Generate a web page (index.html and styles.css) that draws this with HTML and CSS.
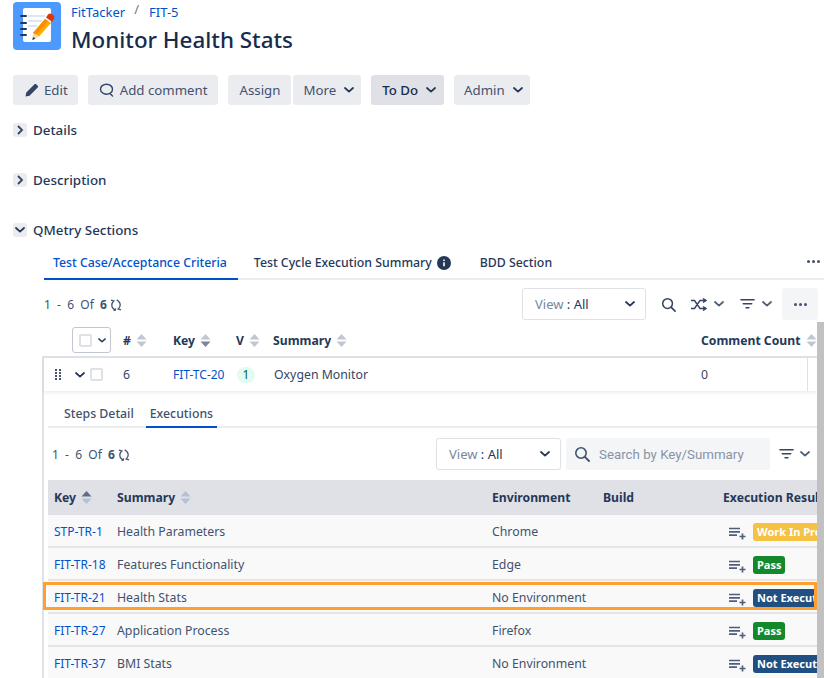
FILE: index.html
```html
<!DOCTYPE html>
<html lang="en">
<head>
  <meta charset="UTF-8">
  <title>FIT-5 Monitor Health Stats</title>
  <link rel="stylesheet" href="styles.css">
</head>
<body>
  <svg width="0" height="0" class="defs">
    <defs>
      <symbol id="chev" viewBox="0 0 10 6"><path d="M1 1l4 3.6L9 1" fill="none" stroke="currentColor" stroke-width="1.8" stroke-linecap="round" stroke-linejoin="round"/></symbol>
      <symbol id="refresh" viewBox="0 0 12 12"><path d="M1 1.200L3.800 2C1.200 4.300 1.200 7.800 3.500 9.800l1.800 1.400M3.500 11.400l1.800-.2.200-1.800M11 10.800L8.200 10C10.800 7.700 10.800 4.200 8.500 2.200L6.700.8" fill="none" stroke="currentColor" stroke-width="1.300"/></symbol>
      <symbol id="search" viewBox="0 0 16 16"><circle cx="7" cy="7" r="5.200" fill="none" stroke="currentColor" stroke-width="1.600"/><path d="M11 11l4 4" stroke="currentColor" stroke-width="1.800" stroke-linecap="round"/></symbol>
      <symbol id="filter" viewBox="0 0 16 12"><path d="M1 1.500h14M3.500 5.800h9M6.500 10h3" stroke="currentColor" stroke-width="1.600" stroke-linecap="round"/></symbol>
      <symbol id="add-list" viewBox="0 0 17 14"><path d="M0 2.500h11M0 5.800h11M0 9.100h8M10.500 10.500h6M13.500 7.500v6" stroke="currentColor" stroke-width="1.700" fill="none"/></symbol>
      <symbol id="sort" viewBox="0 0 11 13"><path class="up" d="M5.500 0l5 5.500H.5z"/><path class="down" d="M5.500 13l-5-5.500h10z"/></symbol>
    </defs>
  </svg>

  <div class="issue-header">
    <svg class="project-icon" width="48" height="48" viewBox="0 0 48 48">
      <rect width="48" height="48" rx="4" fill="#4c9aff"/>
      <rect x="10" y="6" width="28" height="34" rx="2" fill="#fff"/>
      <path d="M8 14h5M8 21h5M8 27h5M8 33h5" stroke="#253858" stroke-width="2" stroke-linecap="round"/>
      <path d="M15 14h17M15 19h14M15 24h9" stroke="#dce7f5" stroke-width="2"/>
      <path d="M32 17l6 4-12 13.500-6-3.500z" fill="#ffab00"/>
      <path d="M32 17l3 2-12 13.700-3-1.700z" fill="#ff8b00"/>
      <path d="M20 31l6 3.500-6.500 3.500z" fill="#f4d6ad"/>
      <path d="M20 35l2.500 1.500-3.200 1.700z" fill="#253858"/>
      <path d="M33 15.500l2-3c1-1.200 2.500-1.300 3.800-.4l1.600 1.200c1.200.9 1.400 2.200.6 3.400l-2 3z" fill="#de350b"/>
    </svg>
    <div class="issue-title">
      <div class="breadcrumbs"><a>FitTacker</a><span class="slash">/</span><a>FIT-5</a></div>
      <h1>Monitor Health Stats</h1>
    </div>
  </div>

  <div class="actions">
    <button class="btn btn-edit">
      <svg width="14" height="14" viewBox="0 0 14 14"><path d="M.5 13.500l.8-4L9.500 1.300c.5-.5 1.200-.5 1.700 0l1.500 1.500c.5.5.5 1.200 0 1.700L4.500 12.700z" fill="#344563"/></svg>
      Edit
    </button>
    <button class="btn btn-comment">
      <svg width="15" height="14" viewBox="0 0 15 14"><path d="M7.500 1.200c3.300 0 6 2.100 6 5s-2.700 5-6 5c-1 0-2-.2-2.800-.5M7.500 1.200c-3.300 0-6 2.100-6 5 0 1.700 1 3.200 2.500 4M11 10.500l2.500 2.500" fill="none" stroke="#344563" stroke-width="1.400" stroke-linecap="round"/></svg>
      Add comment
    </button>
    <div class="btn-group">
      <button class="btn btn-assign">Assign</button>
      <button class="btn btn-drop">More <svg class="chev" width="10" height="6"><use href="#chev"/></svg></button>
    </div>
    <button class="btn btn-drop btn-status">To Do <svg class="chev" width="10" height="6"><use href="#chev"/></svg></button>
    <button class="btn btn-drop">Admin <svg class="chev" width="10" height="6"><use href="#chev"/></svg></button>
  </div>

  <div class="module closed">
    <span class="toggle"><svg width="8" height="10" viewBox="0 0 6 10"><path d="M1 1l4 4-4 4" fill="none" stroke="#344563" stroke-width="1.800"/></svg></span>
    <span>Details</span>
  </div>
  <div class="module closed">
    <span class="toggle"><svg width="8" height="10" viewBox="0 0 6 10"><path d="M1 1l4 4-4 4" fill="none" stroke="#344563" stroke-width="1.800"/></svg></span>
    <span>Description</span>
  </div>
  <div class="module">
    <span class="toggle"><svg class="chev" width="10" height="6"><use href="#chev"/></svg></span>
    <span>QMetry Sections</span>
  </div>

  <div class="qmetry">
    <div class="tabs main-tabs">
      <div class="tab active">Test Case/Acceptance Criteria</div>
      <div class="tab">Test Cycle Execution Summary
        <svg width="14" height="14" viewBox="0 0 14 14"><circle cx="7" cy="7" r="7" fill="#253858"/><path d="M7 6.300v4M7 3.500v1.400" stroke="#fff" stroke-width="1.600"/></svg>
      </div>
      <div class="tab">BDD Section</div>
      <div class="tab-more"><i></i><i></i><i></i></div>
    </div>

    <div class="toolbar">
      <div class="count">1 &nbsp;-&nbsp; 6 &nbsp;Of&nbsp; <b>6</b> <svg width="12" height="12"><use href="#refresh"/></svg></div>
      <div class="view-select"><span><em>View</em> : All</span><svg class="chev" width="10" height="6"><use href="#chev"/></svg></div>
      <svg class="tool-search" width="15" height="15"><use href="#search"/></svg>
      <svg class="tool-shuffle" width="16" height="13" viewBox="0 0 16 13"><path d="M0 2.500h3.500L9 10.500h5M0 10.500h3.500L9 2.500h5M12 .5l3 2-3 2M12 8.500l3 2-3 2" fill="none" stroke="#344563" stroke-width="1.400"/></svg>
      <svg class="chev tool-chev" width="10" height="6"><use href="#chev"/></svg>
      <svg class="tool-filter" width="15" height="12"><use href="#filter"/></svg>
      <svg class="chev tool-chev" width="10" height="6"><use href="#chev"/></svg>
      <div class="more-box"><i></i><i></i><i></i></div>
    </div>

    <div class="case-head">
      <div class="select-all"><span class="check"></span><svg class="chev" width="8" height="5"><use href="#chev"/></svg></div>
      <div class="th-num"># <svg class="sort" width="11" height="13"><use href="#sort"/></svg></div>
      <div class="th-key">Key <svg class="sort sort-down" width="11" height="13"><use href="#sort"/></svg></div>
      <div class="th-v">V <svg class="sort" width="11" height="13"><use href="#sort"/></svg></div>
      <div class="th-summary">Summary <svg class="sort" width="11" height="13"><use href="#sort"/></svg></div>
      <div class="th-count">Comment Count <svg class="sort" width="11" height="13"><use href="#sort"/></svg></div>
    </div>

    <div class="case-body">
      <div class="case-row">
        <div class="drag"><i></i><i></i><i></i><i></i><i></i><i></i><i></i><i></i></div>
        <svg class="chev row-chev" width="10" height="6"><use href="#chev"/></svg>
        <span class="check"></span>
        <div class="td-num">6</div>
        <a class="td-key">FIT-TC-20</a>
        <div class="td-v"><span class="version">1</span></div>
        <div class="td-summary">Oxygen Monitor</div>
        <div class="td-count">0</div>
      </div>

      <div class="detail">
        <div class="tabs sub-tabs">
          <div class="tab">Steps Detail</div>
          <div class="tab active">Executions</div>
        </div>

        <div class="toolbar sub-toolbar">
          <div class="count">1 &nbsp;-&nbsp; 6 &nbsp;Of&nbsp; <b>6</b> <svg width="12" height="12"><use href="#refresh"/></svg></div>
          <div class="view-select"><span><em>View</em> : All</span><svg class="chev" width="10" height="6"><use href="#chev"/></svg></div>
          <div class="search-box"><svg width="16" height="16"><use href="#search"/></svg><span>Search by Key/Summary</span></div>
          <svg class="tool-filter" width="15" height="12"><use href="#filter"/></svg>
          <svg class="chev tool-chev" width="10" height="6"><use href="#chev"/></svg>
        </div>

        <div class="exec-table">
          <div class="exec-row exec-head">
            <div>Key <svg class="sort sort-up" width="11" height="13"><use href="#sort"/></svg></div>
            <div>Summary <svg class="sort" width="11" height="13"><use href="#sort"/></svg></div>
            <div>Environment</div>
            <div>Build</div>
            <div>Execution Result</div>
          </div>
          <div class="exec-row">
            <a>STP-TR-1</a><div>Health Parameters</div><div>Chrome</div><div></div>
            <div class="result"><svg width="17" height="14"><use href="#add-list"/></svg><span class="badge wip">Work In Progress</span></div>
          </div>
          <div class="exec-row">
            <a>FIT-TR-18</a><div>Features Functionality</div><div>Edge</div><div></div>
            <div class="result"><svg width="17" height="14"><use href="#add-list"/></svg><span class="badge pass">Pass</span></div>
          </div>
          <div class="exec-row highlighted">
            <a>FIT-TR-21</a><div>Health Stats</div><div>No Environment</div><div></div>
            <div class="result"><svg width="17" height="14"><use href="#add-list"/></svg><span class="badge not-run">Not Executed</span></div>
          </div>
          <div class="exec-row">
            <a>FIT-TR-27</a><div>Application Process</div><div>Firefox</div><div></div>
            <div class="result"><svg width="17" height="14"><use href="#add-list"/></svg><span class="badge pass">Pass</span></div>
          </div>
          <div class="exec-row">
            <a>FIT-TR-37</a><div>BMI Stats</div><div>No Environment</div><div></div>
            <div class="result"><svg width="17" height="14"><use href="#add-list"/></svg><span class="badge not-run">Not Executed</span></div>
          </div>
        </div>
      </div>
    </div>
    <div class="scrollbar"></div>
  </div>
</body>
</html>
```

FILE: styles.css
```css
* {
  box-sizing: border-box;
}

body {
  margin: 0;
  padding: 2px 0 0 13px;
  height: 678px;
  overflow: hidden;
  font-family: "Noto Sans", sans-serif;
  font-size: 12.3px;
  color: #172b4d;
  background-color: #fff;
}

a {
  color: #0052cc;
  text-decoration: none;
}

.defs {
  position: absolute;
}

.chev {
  color: #253858;
}

/* Issue header */
.issue-header {
  display: flex;
  height: 48px;
}

.project-icon {
  flex: none;
}

.issue-title {
  margin-left: 10px;
}

.breadcrumbs {
  display: flex;
  height: 20px;
  line-height: 20px;
  font-size: 13px;
}

.slash {
  margin: -3px 10px 0 9px;
  color: #6b778c;
}

h1 {
  margin: 4px 0 0;
  font-size: 22.4px;
  font-weight: 500;
  line-height: 28px;
  color: #172b4d;
}

/* Action buttons */
.actions {
  display: flex;
  gap: 10px;
  margin-top: 25px;
}

.btn-group {
  display: flex;
  gap: 2px;
}

.btn {
  display: flex;
  align-items: center;
  gap: 5px;
  height: 30px;
  padding: 0 11px;
  border: 0;
  border-radius: 3px;
  background-color: #ebecf0;
  color: #42526e;
  font-family: inherit;
  font-size: 13.25px;
}

.btn-edit {
  padding: 0 10px 0 12px;
}

.btn-comment {
  gap: 6px;
  padding-right: 10px;
}

.btn-assign {
  padding: 0 11px 0 12px;
}

.btn-drop {
  padding: 0 7px 0 10px;
}

.btn .chev {
  margin-left: 3px;
}

.btn-status {
  padding: 0 8px 0 11px;
  background-color: #dfe1e6;
  color: #172b4d;
  font-weight: 500;
}

/* Collapsible modules */
.module {
  display: flex;
  align-items: center;
  gap: 6px;
  height: 20px;
  margin-top: 30px;
  font-size: 13.4px;
  font-weight: 500;
  color: #253858;
}

.actions + .module {
  margin-top: 15px;
}

.toggle {
  display: flex;
  align-items: center;
  justify-content: center;
  width: 14px;
  height: 14px;
  border-radius: 3px;
  background-color: #ebecf0;
}

/* QMetry panel */
.qmetry {
  position: relative;
  margin-left: 29px;
  margin-top: 10px;
}

.tabs {
  display: flex;
  align-items: flex-end;
  border-bottom: 2px solid #ebecf0;
}

.tab {
  display: flex;
  align-items: center;
  gap: 5px;
  margin-bottom: -2px;
  border-bottom: 2px solid transparent;
  color: #253858;
  white-space: nowrap;
}

.tab.active {
  color: #0052cc;
  border-bottom-color: #0052cc;
}

.main-tabs {
  height: 30px;
  width: 782px;
  margin-left: 2px;
  padding-right: 6px;
}

.main-tabs .tab {
  height: 30px;
  padding: 0 11px 3px 9px;
  margin-right: 16px;
  font-weight: 500;
}

.main-tabs .tab:nth-child(2) {
  margin-right: 17px;
  padding-right: 0;
  padding-left: 0;
}

.main-tabs .tab:nth-child(3) {
  padding-left: 12px;
}

.tab-more,
.more-box {
  display: flex;
  align-items: center;
  justify-content: center;
  gap: 2px;
}

.tab-more {
  height: 30px;
  margin-left: auto;
  padding-bottom: 3px;
}

.tab-more i,
.more-box i {
  width: 3px;
  height: 3px;
  border-radius: 50%;
  background-color: #42526e;
}

.toolbar {
  display: flex;
  align-items: center;
  height: 32px;
  margin-top: 8px;
  padding-left: 2px;
}

.count {
  flex: 1;
  font-size: 12px;
  color: #42526e;
  white-space: nowrap;
}

.count svg {
  vertical-align: -2px;
}

.view-select {
  display: flex;
  align-items: center;
  justify-content: space-between;
  width: 124px;
  height: 32px;
  padding: 0 10px 0 12px;
  border: 1px solid #dfe1e6;
  border-radius: 3px;
  font-size: 13px;
  color: #253858;
}

.view-select em {
  font-style: normal;
  color: #7a869a;
}

.tool-search {
  margin-left: 15px;
  color: #344563;
}

.tool-shuffle {
  margin-left: 15px;
}

.tool-chev {
  margin-left: 7px;
  color: #505f79;
}

.tool-filter {
  margin-left: 16px;
  color: #344563;
}

.more-box {
  width: 36px;
  height: 32px;
  margin-left: 10px;
  margin-right: 6px;
  border-radius: 3px;
  background-color: #f4f5f7;
}

/* Test case table */
.case-head {
  display: flex;
  align-items: center;
  height: 36px;
  padding-top: 4px;
  font-size: 12.2px;
  font-weight: 700;
  color: #253858;
  white-space: nowrap;
}

.select-all {
  display: flex;
  align-items: center;
  gap: 6px;
  width: 39px;
  height: 26px;
  margin-left: 30px;
  padding-left: 6px;
  border: 1px solid #c1c7d0;
  border-radius: 3px;
}

.check {
  display: block;
  flex: none;
  width: 13px;
  height: 13px;
  border: 2px solid #dfe1e6;
  border-radius: 2px;
}

.sort {
  vertical-align: -2px;
  margin-left: 2px;
}

.up {
  fill: var(--sort-up, #c1c7d0);
}

.down {
  fill: var(--sort-down, #c1c7d0);
}

.sort-down {
  --sort-down: #7a869a;
}

.th-num {
  width: 50px;
  margin-left: 12px;
}

.th-key {
  width: 63px;
}

.th-v {
  width: 37px;
}

.th-summary {
  width: 428px;
}

.case-body {
  width: 775px;
  border-top: 2px solid #dfe1e6;
  border-left: 2px solid #dfe1e6;
}

.case-row {
  display: flex;
  align-items: center;
  height: 33px;
  color: #344563;
  box-shadow: 0 2px 3px rgba(9, 30, 66, 0.08);
}

.drag {
  display: grid;
  grid-template-columns: 2px 2px;
  gap: 1px 2px;
  margin-left: 11px;
}

.drag i {
  width: 2px;
  height: 2px;
  background-color: #42526e;
}

.row-chev {
  margin-left: 14px;
}

.case-row .check {
  margin-left: 5px;
}

.td-num {
  width: 50px;
  margin-left: 20px;
}

.td-key {
  width: 63px;
  font-size: 12px;
}

.td-v {
  width: 37px;
  padding-left: 1px;
}

.version {
  display: block;
  width: 18px;
  height: 16px;
  border-radius: 8px;
  background-color: #e3fcef;
  color: #006644;
  font-size: 12px;
  line-height: 16px;
  text-align: center;
}

.td-summary {
  width: 428px;
  padding-left: 1px;
}

.td-count {
  display: flex;
  align-items: center;
  width: 107px;
  height: 100%;
  border-right: 1px solid #dfe1e6;
}

/* Executions panel */
.detail {
  padding: 3px 0 0 4px;
}

.sub-tabs {
  height: 34px;
}

.sub-tabs .tab {
  height: 28px;
  font-weight: 500;
  color: #42526e;
}

.sub-tabs .tab:first-child {
  margin-left: 16px;
  margin-right: 12px;
}

.sub-tabs .tab.active {
  padding: 0 4px;
  color: #42526e;
}

.sub-toolbar {
  margin-top: 10px;
  padding-left: 4px;
}

.sub-toolbar .view-select {
  width: 125px;
}

.search-box {
  display: flex;
  align-items: center;
  gap: 9px;
  width: 204px;
  height: 32px;
  margin-left: 5px;
  padding-left: 8px;
  border-radius: 3px;
  background-color: #f4f5f7;
  color: #8993a4;
  font-family: "Roboto", sans-serif;
  font-size: 13.3px;
  white-space: nowrap;
}

.search-box svg {
  color: #42526e;
}

.sub-toolbar .tool-filter {
  margin-left: 9px;
}

.sub-toolbar .tool-chev {
  margin-left: 6px;
  margin-right: 7px;
}

.exec-table {
  position: relative;
  width: 769px;
  margin-top: 10px;
  clip-path: inset(0 0 0 -6px);
}

.exec-row {
  position: relative;
  display: grid;
  grid-template-columns: 63px 375px 111px 120px 100px;
  align-items: center;
  height: 33px;
  padding: 2px 0 0 6px;
  background-color: #f9f9f9;
  border-bottom: 2px solid #e4e5e9;
  color: #42526e;
  white-space: nowrap;
}

.exec-row a {
  font-size: 12px;
}

.exec-head {
  height: 35px;
  padding-top: 0;
  background-color: #dfe1e6;
  border-bottom: 0;
  font-size: 12.2px;
  font-weight: 700;
  color: #253858;
  --sort-up: #b3c0d6;
  --sort-down: #b3c0d6;
}

.exec-head .sort-up {
  --sort-up: #5e6c84;
}

.result {
  display: flex;
  align-items: center;
  gap: 7px;
  padding-left: 6px;
}

.result svg {
  flex: none;
  margin-top: 2px;
  color: #505f79;
}

.badge {
  display: block;
  flex: none;
  height: 18px;
  padding: 0 4px;
  border-radius: 3px;
  color: #fff;
  font-size: 11px;
  font-weight: 700;
  line-height: 18px;
}

.wip {
  background-color: #f6c244;
}

.pass {
  background-color: #14892c;
}

.not-run {
  background-color: #205081;
}

.highlighted::after {
  content: "";
  position: absolute;
  left: -5px;
  top: 1px;
  right: 0;
  bottom: 2px;
  border: 3px solid #ff9f32;
}

.scrollbar {
  position: absolute;
  left: 775px;
  top: 72px;
  width: 7px;
  height: 400px;
  background-color: #c1c1c1;
}
```
